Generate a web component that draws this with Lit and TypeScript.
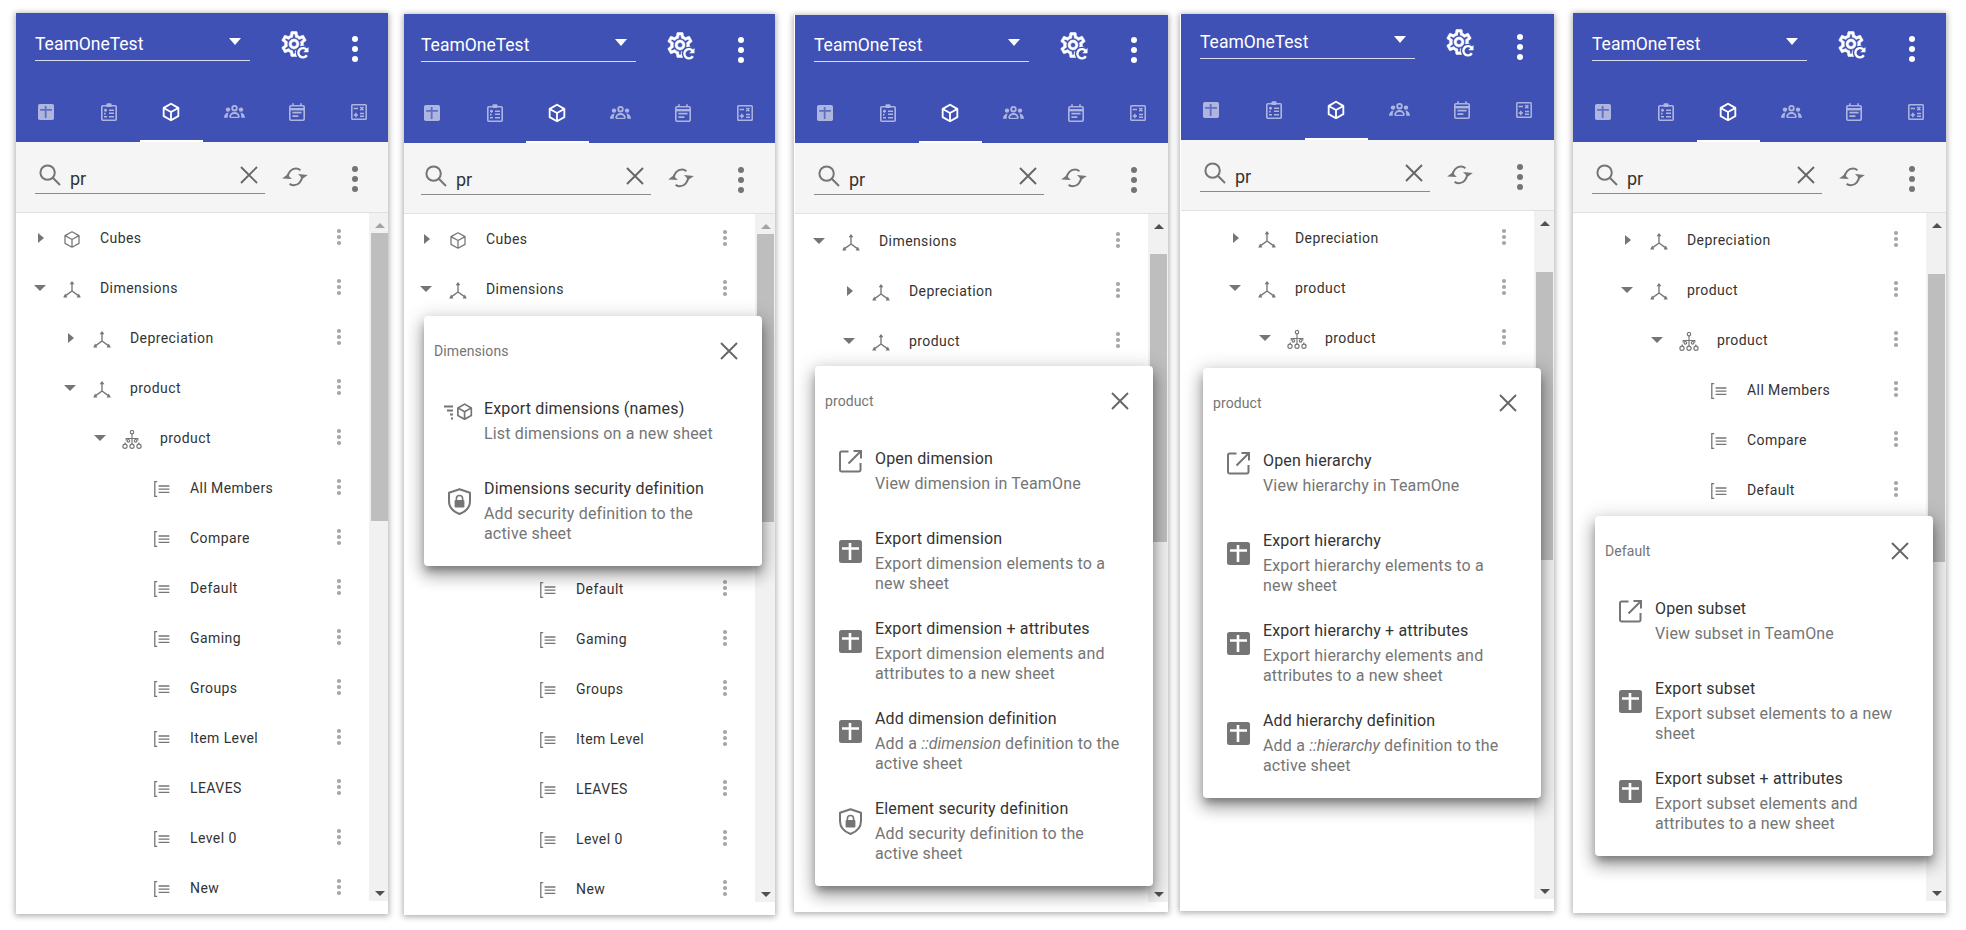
import { LitElement, html, css } from "lit";
import { customElement } from "lit/decorators.js";

const GRAY = "#757575";

const gearPath = "M12,8A4,4 0 0,1 16,12A4,4 0 0,1 12,16A4,4 0 0,1 8,12A4,4 0 0,1 12,8M12,10A2,2 0 0,0 10,12A2,2 0 0,0 12,14A2,2 0 0,0 14,12A2,2 0 0,0 12,10M10,22C9.75,22 9.54,21.82 9.5,21.58L9.13,18.93C8.5,18.68 7.96,18.34 7.44,17.94L4.95,18.95C4.73,19.03 4.46,18.95 4.34,18.73L2.34,15.27C2.21,15.05 2.27,14.78 2.46,14.63L4.57,12.97L4.5,12L4.57,11L2.46,9.37C2.27,9.22 2.21,8.95 2.34,8.73L4.34,5.27C4.46,5.05 4.73,4.96 4.95,5.05L7.44,6.05C7.96,5.66 8.5,5.32 9.13,5.07L9.5,2.42C9.54,2.18 9.75,2 10,2H14C14.25,2 14.46,2.18 14.5,2.42L14.87,5.07C15.5,5.32 16.04,5.66 16.56,6.05L19.05,5.05C19.27,4.96 19.54,5.05 19.66,5.27L21.66,8.73C21.79,8.95 21.73,9.22 21.54,9.37L19.43,11L19.5,12L19.43,13L21.54,14.63C21.73,14.78 21.79,15.05 21.66,15.27L19.66,18.73C19.54,18.95 19.27,19.04 19.05,18.95L16.56,17.95C16.04,18.34 15.5,18.68 14.87,18.93L14.5,21.58C14.46,21.82 14.25,22 14,22H10M11.25,4L10.88,6.61C9.68,6.86 8.62,7.5 7.85,8.39L5.44,7.35L4.69,8.65L6.8,10.2C6.4,11.37 6.4,12.64 6.8,13.8L4.68,15.36L5.43,16.66L7.86,15.62C8.63,16.5 9.68,17.14 10.87,17.38L11.24,20H12.76L13.13,17.39C14.32,17.14 15.37,16.5 16.14,15.62L18.57,16.66L19.32,15.36L17.2,13.81C17.6,12.64 17.6,11.37 17.2,10.2L19.31,8.65L18.56,7.35L16.15,8.39C15.38,7.5 14.32,6.86 13.12,6.62L12.75,4H11.25Z";
const cubePath = "M21,16.5C21,16.88 20.79,17.21 20.47,17.38L12.57,21.82C12.41,21.94 12.21,22 12,22C11.79,22 11.59,21.94 11.43,21.82L3.53,17.38C3.21,17.21 3,16.88 3,16.5V7.5C3,7.12 3.21,6.79 3.53,6.62L11.43,2.18C11.59,2.06 11.79,2 12,2C12.21,2 12.41,2.06 12.57,2.18L20.47,6.62C20.79,6.79 21,7.12 21,7.5V16.5M12,4.15L6.04,7.5L12,10.85L17.96,7.5L12,4.15M5,15.91L11,19.29V12.58L5,9.21V15.91M19,15.91V9.21L13,12.58V19.29L19,15.91Z";

const gear = () => html`<svg width="30" height="30" viewBox="0 0 24 24">
  <path d=${gearPath} fill="#fff" stroke="#fff" stroke-width=".45"/>
  <circle cx="19" cy="19" r="5.6" fill="#3f51b5"/>
  <path d="M22.3 17A3.7 3.7 0 1 0 22.3 21" fill="none" stroke="#fff" stroke-width="1.9"/>
  <path d="M19.4 18.6H23.6V14.4Z" fill="#fff"/>
</svg>`;

const kebab = (cls: string) => html`<span class="kebab ${cls}"><i></i><i></i><i></i></span>`;

const tableIcon = (bg: string, cross: string, size = 23) => html`<svg width=${size} height=${size} viewBox="0 0 23 23">
  <rect width="23" height="23" rx="2.5" fill=${bg}/>
  <path d="M3 8.5H20M11 3V20" stroke=${cross} stroke-width="2.6" fill="none"/>
</svg>`;

const LILAC = "#aeb6e0";
const tabIcons = [
  () => tableIcon(LILAC, "#5f6fc2", 16),
  () => html`<svg width="16" height="18" viewBox="0 0 16 18" fill="none" stroke=${LILAC} stroke-width="1.6">
    <rect x=".8" y="2.8" width="14.4" height="14.4" rx="1"/>
    <rect x="5.5" y=".3" width="5" height="3.8" rx="1" fill=${LILAC} stroke="none"/>
    <path d="M8 7.3H13M8 10.3H13M8 13.8H13M3 7.3H6M3 13.8H6M4.5 5.8V8.8M3 10.6H4.6" />
  </svg>`,
  () => html`<svg width="22" height="22" viewBox="0 0 24 24"><path d=${cubePath} fill="#fff"/></svg>`,
  () => html`<svg width="21" height="13" viewBox="0 0 21 13" fill="none">
    <circle cx="10.5" cy="3.2" r="2.3" stroke=${LILAC} stroke-width="1.8"/>
    <circle cx="4" cy="4.6" r="2.2" fill=${LILAC}/><circle cx="17" cy="4.6" r="2.2" fill=${LILAC}/>
    <path d="M6 12.3C6 9.8 8 8 10.5 8S15 9.8 15 12.3" stroke=${LILAC} stroke-width="1.8"/>
    <path d="M6 12.4H15" stroke=${LILAC} stroke-width="1.2"/>
    <path d="M0 12.8C0 9.8 1.8 8 4.6 7.6C3.8 9 3.7 11 3.7 12.8ZM21 12.8C21 9.8 19.2 8 16.4 7.6C17.2 9 17.3 11 17.3 12.8Z" fill=${LILAC}/>
  </svg>`,
  () => html`<svg width="16" height="18" viewBox="0 0 16 18" fill="none" stroke=${LILAC} stroke-width="1.6">
    <rect x=".8" y="2.8" width="14.4" height="14.4" rx="1.2"/>
    <path d="M.8 6.2H15.2" stroke-width="2.4"/>
    <path d="M4 .3V3M12 .3V3"/>
    <path d="M3.4 9.7H12.6M3.4 13.2H9.4" stroke-width="1.8"/>
  </svg>`,
  () => html`<svg width="16" height="16" viewBox="0 0 16 16" fill="none" stroke=${LILAC} stroke-width="1.5">
    <rect x=".8" y=".8" width="14.4" height="14.4" rx=".8"/>
    <path d="M2.6 4.6H7M9.2 3L12.4 6.2M12.4 3L9.2 6.2M2.6 11H7M4.8 8.8V13.2M9 9.6H13M9 12.2H13" />
  </svg>`,
];

const searchIcon = () => html`<svg width="22" height="22" viewBox="0 0 22 22" fill="none" stroke="#757575" stroke-width="2">
  <circle cx="8.6" cy="8.6" r="7.2"/><path d="M13.8 13.8L21 21"/></svg>`;
const closeIcon = () => html`<svg width="18" height="18" viewBox="0 0 18 18" fill="none" stroke="#666" stroke-width="1.9">
  <path d="M1 1L17 17M17 1L1 17"/></svg>`;
const syncIcon = () => html`<svg width="26" height="20" viewBox="0 0 26 20" fill="none">
  <path d="M5.6 10.5C5.8 5.3 9.4 1.6 14 1.6C15.6 1.6 17.2 2.2 18.4 3.2" stroke="#757575" stroke-width="2"/>
  <path d="M20.2 9C20 14.4 16.4 18.2 12 18.2C10.2 18.2 8.8 17.6 7.6 16.8" stroke="#757575" stroke-width="2"/>
  <path d="M.2 11.4L5.4 7.4L9.8 12Z" fill="#757575"/><path d="M25.8 8L20.6 11.8L16 7Z" fill="#757575"/>
</svg>`;

const cubeTree = () => html`<svg width="16" height="17" viewBox="0 0 16 17" fill="none" stroke=${GRAY} stroke-width="1.25">
  <path d="M8 .8L15 4.6V12.4L8 16.2L1 12.4V4.6ZM1 4.6L8 8.5L15 4.6M8 8.5V16.2" stroke-linejoin="round"/></svg>`;
const axisIcon = () => html`<svg width="18" height="17" viewBox="0 0 18 17" fill="none">
  <path d="M9 10V2M9 10L3 14.4M9 10L15 14.4" stroke=${GRAY} stroke-width="1.35"/>
  <path d="M9 0L6.6 3.2H11.4ZM.2 16.4L4.3 16.4L2.2 12.6ZM17.8 16.4L13.7 16.4L15.8 12.6Z" fill=${GRAY}/></svg>`;
const hierIcon = () => html`<svg width="20" height="19" viewBox="0 0 20 19" fill="none" stroke=${GRAY} stroke-width="1.15">
  <circle cx="10" cy="2.2" r="1.7"/>
  <path d="M10 4V7M4.2 10.5V8.5H15.8V10.5M10 7V14.2M3.2 12.5V14.2M16.8 12.5V14.2"/>
  <circle cx="6.4" cy="10.8" r="1.3"/><circle cx="13.6" cy="10.8" r="1.3"/>
  <circle cx="3" cy="16.2" r="2.1"/><circle cx="10" cy="16.2" r="2.1"/><circle cx="17" cy="16.2" r="2.1"/></svg>`;
const subsetIcon = () => html`<svg width="16" height="16" viewBox="0 0 16 16" fill="none" stroke=${GRAY} stroke-width="1.3">
  <path d="M3.2 .6H.8V15.4H3.2" /><path d="M4.6 5H15.4M4.6 8.2H15.4M4.6 11.4H15.4"/></svg>`;

const openIcon = () => html`<svg width="23" height="23" viewBox="0 0 23 23" fill="none" stroke=${GRAY} stroke-width="2">
  <path d="M9.5 1.5H2.4A1.4 1.4 0 0 0 1 2.9V20.1A1.4 1.4 0 0 0 2.4 21.5H20.1A1.4 1.4 0 0 0 21.5 20.1V13"/>
  <path d="M9.5 13.5L21.5 1.5M14.5 1H22V8.5"/></svg>`;
const shieldIcon = () => html`<svg width="23" height="27" viewBox="0 0 23 27" fill="none">
  <path d="M11.5 1.2L22 4.8V13C22 19 17.8 23.6 11.5 26C5.2 23.6 1 19 1 13V4.8Z" stroke=${GRAY} stroke-width="2" stroke-linejoin="round"/>
  <rect x="6.6" y="12" width="9.8" height="7.4" rx="1" fill=${GRAY}/>
  <path d="M8.4 12.5V10.6A3.1 3.1 0 0 1 14.6 10.6V12.5" stroke=${GRAY} stroke-width="1.6"/></svg>`;
const exportCubeIcon = () => html`<svg width="30" height="20" viewBox="0 0 30 20" fill="none">
  <path d="M0 4.5H9M3 8.5H9M6 12.5H9M7 16.5H9" stroke=${GRAY} stroke-width="1.8"/>
  <g transform="translate(10.5 -.4) scale(.84)"><path d=${cubePath} fill=${GRAY}/></g></svg>`;

type Row = { t: string; l: number; a?: "r" | "d"; i: () => unknown };
const R = {
  cubes: { t: "Cubes", l: 0, a: "r", i: cubeTree } as Row,
  dims: { t: "Dimensions", l: 0, a: "d", i: axisIcon } as Row,
  dep: { t: "Depreciation", l: 1, a: "r", i: axisIcon } as Row,
  prod: { t: "product", l: 1, a: "d", i: axisIcon } as Row,
  hier: { t: "product", l: 2, a: "d", i: hierIcon } as Row,
};
const sub = (t: string): Row => ({ t, l: 3, i: subsetIcon });
const fullRows: Row[] = [R.cubes, R.dims, R.dep, R.prod, R.hier, ...["All Members", "Compare", "Default", "Gaming", "Groups", "Item Level", "LEAVES", "Level 0", "New"].map(sub)];

type Item = { icon: () => unknown; title: string; desc: unknown; two?: boolean };
const tbl = () => tableIcon(GRAY, "#fff");

const popups = {
  dims: { title: "Dimensions", items: [
    { icon: exportCubeIcon, title: "Export dimensions (names)", desc: "List dimensions on a new sheet" },
    { icon: shieldIcon, title: "Dimensions security definition", desc: "Add security definition to the active sheet", two: true },
  ] as Item[] },
  dim: { title: "product", items: [
    { icon: openIcon, title: "Open dimension", desc: "View dimension in TeamOne" },
    { icon: tbl, title: "Export dimension", desc: "Export dimension elements to a new sheet", two: true },
    { icon: tbl, title: "Export dimension + attributes", desc: "Export dimension elements and attributes to a new sheet", two: true },
    { icon: tbl, title: "Add dimension definition", desc: html`Add a <em>::dimension</em> definition to the active sheet`, two: true },
    { icon: shieldIcon, title: "Element security definition", desc: "Add security definition to the active sheet", two: true },
  ] as Item[] },
  hier: { title: "product", items: [
    { icon: openIcon, title: "Open hierarchy", desc: "View hierarchy in TeamOne" },
    { icon: tbl, title: "Export hierarchy", desc: "Export hierarchy elements to a new sheet", two: true },
    { icon: tbl, title: "Export hierarchy + attributes", desc: "Export hierarchy elements and attributes to a new sheet", two: true },
    { icon: tbl, title: "Add hierarchy definition", desc: html`Add a <em>::hierarchy</em> definition to the active sheet`, two: true },
  ] as Item[] },
  subset: { title: "Default", items: [
    { icon: openIcon, title: "Open subset", desc: "View subset in TeamOne" },
    { icon: tbl, title: "Export subset", desc: "Export subset elements to a new sheet", two: true },
    { icon: tbl, title: "Export subset + attributes", desc: "Export subset elements and attributes to a new sheet", two: true },
  ] as Item[] },
};

type Panel = { cls: string; rows: Row[]; popup?: { title: string; items: Item[] } };
const panels: Panel[] = [
  { cls: "p1", rows: fullRows },
  { cls: "p2", rows: fullRows, popup: popups.dims },
  { cls: "p3", rows: [R.dims, R.dep, R.prod], popup: popups.dim },
  { cls: "p4", rows: [R.dep, R.prod, R.hier], popup: popups.hier },
  { cls: "p5", rows: [R.dep, R.prod, R.hier, sub("All Members"), sub("Compare"), sub("Default")], popup: popups.subset },
];

@customElement("app-root")
export class AppRoot extends LitElement {
  static styles = css`
    :host { display: block; width: 1966px; height: 930px; background: #fff; overflow: hidden; font-family: Roboto, "Liberation Sans", sans-serif; }
    .root { display: flex; align-items: flex-start; padding-left: 16px; }
    .panel { background: #fff; overflow: hidden; box-shadow: 0 1px 6px 1px rgba(0,0,0,.32); flex: none; }
    .inner { position: relative; width: 373px; }
    .p1 { width: 372px; height: 901px; margin-top: 13px; }
    .p2 { width: 371px; height: 901px; margin: 14px 0 0 16px; }
    .p3 { width: 374px; height: 897px; margin: 15px 0 0 19px; }
    .p4 { width: 374px; height: 897px; margin: 14px 0 0 12px; }
    .p5 { width: 373px; height: 900px; margin: 13px 0 0 19px; }
    .p2 .inner { margin-left: -2px; }
    .p3 .inner { margin: -1px 0 0 1px; }
    .p4 .inner { margin: -3px 0 0 1px; }

    header { background: #3f51b5; height: 129px; display: flex; flex-direction: column; }
    .top { height: 69px; display: flex; align-items: flex-start; padding: 17px 0 0 19px; box-sizing: border-box; }
    .select { width: 215px; height: 31px; border-bottom: 1px solid rgba(255,255,255,.8); box-sizing: border-box; color: #fff; font-size: 17.5px; line-height: 28px; display: flex; justify-content: space-between; }
    .caret { width: 0; height: 0; border: 6.5px solid transparent; border-top: 7px solid #fff; border-bottom: 0; margin: 8px 9px 0 0; }
    .gear { margin: -1px 0 0 29px; width: 30px; height: 30px; }
    .gear svg { display: block; }
    .top .kebab { margin: 6px 0 0 31px; }
    .kebab { display: flex; flex-direction: column; align-items: center; flex: none; width: 30px; }
    .kebab i { display: block; border-radius: 50%; }
    .big i { width: 6.4px; height: 6.4px; margin-bottom: 3.6px; }
    .white i { background: #fff; }
    .dark i { background: #757575; }
    .tabs { display: grid; grid-template-columns: repeat(6, 62.6px); margin-left: -1px; height: 60px; }
    .tab { display: flex; align-items: center; justify-content: center; box-sizing: border-box; padding-top: 1px; border-bottom: 2px solid transparent; }
    .tab.on { border-bottom-color: #fff; }
    .tab svg { display: block; }

    .search { height: 71px; box-sizing: border-box; background: #f5f5f5; border-bottom: 1px solid #e0e0e0; display: flex; align-items: flex-start; padding: 21px 0 0 19px; }
    .field { width: 230px; height: 31px; box-sizing: border-box; border-bottom: 1px solid #8a8a8a; display: flex; align-items: flex-start; }
    .field svg { display: block; flex: none; }
    .mag { margin: 1px 0 0 4px; }
    .q { flex: 1; font-size: 18px; color: #333; margin-left: 9px; line-height: 30px; padding-top: 1px; }
    .clr { margin: 3px 7px 0 0; }
    .sync { margin: 4px 0 0 17px; flex: none; }
    .search .kebab { margin: 3px 0 0 32px; }
    .search .sync svg { display: block; }

    .tree { display: flex; height: 688px; }
    .list { width: 353px; overflow: hidden; flex: none; }
    .scrolled .list { padding-top: 2px; }
    .row { height: 50px; display: flex; align-items: center; font-size: 14px; color: #333; letter-spacing: .42px; box-sizing: border-box; padding-right: 14px; }
    .indent { flex: none; }
    .lv1 { width: 30px; } .lv2 { width: 60px; } .lv3 { width: 90px; }
    .arrow { width: 16px; margin-left: 16px; flex: none; display: flex; justify-content: center; }
    .ar { border-style: solid; border-color: transparent transparent transparent #757575; border-width: 5.5px 0 5.5px 6px; margin-left: 1px; }
    .ad { border-style: solid; border-color: #757575 transparent transparent; border-width: 6.5px 6px 0; }
    .ri { width: 24px; margin-left: 12px; flex: none; display: flex; justify-content: center; padding-top: 2px; }
    .ri svg { display: block; }
    .lbl { margin-left: 16px; flex: 1; white-space: nowrap; }
    .tiny { width: 32px; }
    .tiny i { width: 3.6px; height: 3.6px; margin-bottom: 2.4px; background: #a8a8a8; }

    .bar { width: 20px; background: #f1f1f1; display: flex; flex-direction: column; flex: none; }
    .sb { height: 20px; flex: none; display: flex; justify-content: center; align-items: center; }
    .up { width: 0; height: 0; border: 5px solid transparent; border-top: 0; border-bottom: 5px solid #505050; margin: 4px 0 0 1px; }
    .dn { width: 0; height: 0; border: 5px solid transparent; border-bottom: 0; border-top: 5px solid #505050; margin: 4px 0 0 1px; }
    .p1 .up, .p2 .up { border-bottom-color: #a3a3a3; }
    .thumb { height: 288px; width: 17px; margin-left: 2px; background: #bebebe; flex: none; }
    .p3 .thumb { margin-top: 20px; }
    .p4 .thumb, .p5 .thumb { margin-top: 41px; }
    .fill { flex: 1; }

    .popup { position: absolute; width: 338px; box-sizing: border-box; background: #fff; border-radius: 4px; padding-bottom: 10px;
      box-shadow: 0 6px 8px -2px rgba(0,0,0,.35), 0 10px 16px 2px rgba(0,0,0,.2), 0 3px 18px 4px rgba(0,0,0,.14); }
    .p2 .popup { left: 22px; top: 302px; }
    .p3 .popup { left: 20px; top: 352px; }
    .p4 .popup { left: 22px; top: 357px; }
    .p5 .popup { left: 22px; top: 503px; }
    .ph { height: 70px; display: flex; align-items: center; justify-content: space-between; padding: 0 24px 0 10px; }
    .ph span { font-size: 14px; color: #757575; letter-spacing: .1px; }
    .ph svg { display: block; }
    .item { display: flex; min-height: 80px; box-sizing: border-box; padding: 13px 0 12px; }
    .ic { width: 30px; height: 27px; margin: -1px 0 0 20px; flex: none; display: flex; align-items: center; justify-content: center; }
    .ic svg { display: block; }
    .two .ic { margin-top: 9px; }
    .tx { width: 250px; margin-left: 10px; }
    .tt { font-size: 16px; line-height: 20px; color: #333; letter-spacing: .17px; margin-bottom: 5px; white-space: nowrap; }
    .dd { font-size: 16px; line-height: 20px; color: #757575; letter-spacing: .17px; }
    .dd em { font-style: italic; letter-spacing: 0; }
  `;

  private renderRow(r: Row) {
    return html`<div class="row">
      <span class="indent lv${r.l}"></span>
      <span class="arrow">${r.a ? html`<span class=${r.a === "r" ? "ar" : "ad"}></span>` : ""}</span>
      <span class="ri">${r.i()}</span>
      <span class="lbl">${r.t}</span>
      ${kebab("tiny")}
    </div>`;
  }

  private renderPopup(p: { title: string; items: Item[] }) {
    return html`<div class="popup">
      <div class="ph"><span>${p.title}</span>${closeIcon()}</div>
      ${p.items.map(it => html`<div class="item ${it.two ? "two" : ""}">
        <div class="ic">${it.icon()}</div>
        <div class="tx"><div class="tt">${it.title}</div><div class="dd">${it.desc}</div></div>
      </div>`)}
    </div>`;
  }

  private renderPanel(p: Panel) {
    const scrolled = p.cls !== "p1" && p.cls !== "p2";
    return html`<section class="panel ${p.cls} ${scrolled ? "scrolled" : ""}">
      <div class="inner">
        <header>
          <div class="top">
            <div class="select"><span>TeamOneTest</span><span class="caret"></span></div>
            <span class="gear">${gear()}</span>
            ${kebab("big white")}
          </div>
          <div class="tabs">${tabIcons.map((ic, i) => html`<div class="tab ${i === 2 ? "on" : ""}">${ic()}</div>`)}</div>
        </header>
        <div class="search">
          <div class="field">
            <span class="mag">${searchIcon()}</span>
            <span class="q">pr</span>
            <span class="clr">${closeIcon()}</span>
          </div>
          <span class="sync">${syncIcon()}</span>
          ${kebab("big dark")}
        </div>
        <div class="tree">
          <div class="list">${p.rows.map(r => this.renderRow(r))}</div>
          <div class="bar">
            <div class="sb"><span class="up"></span></div>
            <div class="thumb"></div>
            <div class="fill"></div>
            <div class="sb"><span class="dn"></span></div>
          </div>
        </div>
        ${p.popup ? this.renderPopup(p.popup) : ""}
      </div>
    </section>`;
  }

  render() {
    return html`<div class="root">${panels.map(p => this.renderPanel(p))}</div>`;
  }
}
